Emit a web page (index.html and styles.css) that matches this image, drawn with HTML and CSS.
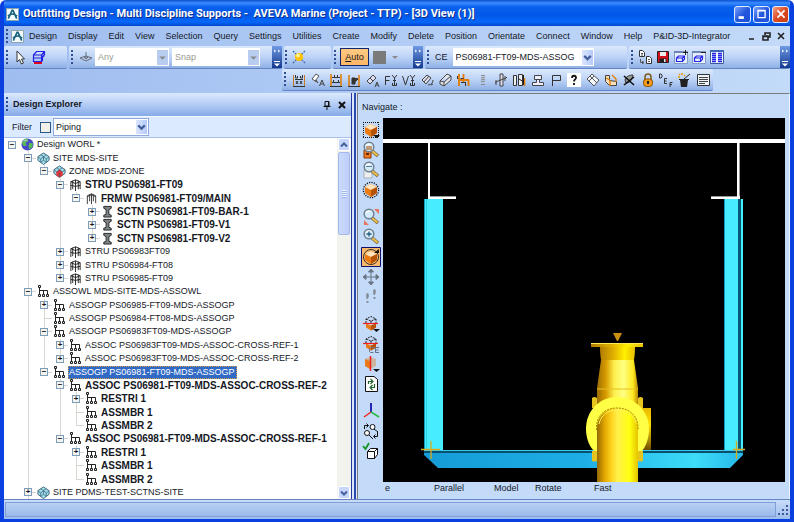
FILE: index.html
```html
<!DOCTYPE html>
<html lang="en">
<head>
<meta charset="utf-8">
<title>Outfitting Design</title>
<link rel="stylesheet" href="styles.css">
</head>
<body>
<svg class="defs" aria-hidden="true">
  <defs>
    <linearGradient id="steel" x1="0" x2="1"><stop offset="0" stop-color="#159cd6"/><stop offset=".5" stop-color="#1eaee6"/><stop offset=".85" stop-color="#3edcf8"/><stop offset="1" stop-color="#26b8ea"/></linearGradient>
    <linearGradient id="neck" x1="0" x2="1"><stop offset="0" stop-color="#9a6c00"/><stop offset=".22" stop-color="#d99c00"/><stop offset=".42" stop-color="#fdf04e"/><stop offset=".65" stop-color="#ffff82"/><stop offset=".88" stop-color="#ffe820"/><stop offset="1" stop-color="#b98700"/></linearGradient>
    <linearGradient id="collar" x1="0" x2="1"><stop offset="0" stop-color="#b07c00"/><stop offset=".4" stop-color="#e2b200"/><stop offset=".7" stop-color="#fff000"/><stop offset="1" stop-color="#e8bd00"/></linearGradient>
    <linearGradient id="pipe" x1="0" x2="1"><stop offset="0" stop-color="#946800"/><stop offset=".18" stop-color="#e0a600"/><stop offset=".35" stop-color="#ffd21e"/><stop offset=".5" stop-color="#fff04a"/><stop offset=".8" stop-color="#ffff10"/><stop offset="1" stop-color="#e6c400"/></linearGradient>
    <linearGradient id="side" x1="0" y1="0" x2="0" y2="1"><stop offset="0" stop-color="#e8b800"/><stop offset=".4" stop-color="#ffe000"/><stop offset="1" stop-color="#6e4c00"/></linearGradient>
  </defs>
  <symbol id="logo" viewBox="0 0 14 14"><rect width="14" height="14" rx="1" fill="#f4fbfd"/><path d="M.5.5h13v13H.5z" fill="none" stroke="#8099a8"/><path d="M2.500 11.500 6.500 2.500h1l4 9M2 8.500c4-3 7-3 10 .5" fill="none" stroke="#17627f" stroke-width="1.700"/></symbol>
  <symbol id="chev" viewBox="0 0 10 10"><path d="m2 3.500 3 3 3-3" fill="none" stroke="#435f9c" stroke-width="2"/></symbol>
  <symbol id="tri" viewBox="0 0 10 10"><path d="M2 4h6L5 7z" fill="#8a8a8a"/></symbol>
  <symbol id="more" viewBox="0 0 10 22"><path d="M2 4l1.500 1L2 6M6 4l1.500 1L6 6" fill="none" stroke="#fff"/><path d="M2 15h6v1H2zM2 17.500h6l-3 3z" fill="#fff"/></symbol>
  <symbol id="arrow" viewBox="0 0 16 16"><path d="M5 2v11l2.500-2.500L9.500 15l2-1-2-4h3z" fill="#fff" stroke="#333"/></symbol>
  <symbol id="bluebox" viewBox="0 0 16 16"><path d="M2.500 6 5.500 2.500h8v3l-2 2v4l-1 1h-8zM2.500 6h8v6.500M10.500 6l3-3.500M2.500 9h8l3-2.500" fill="none" stroke="#2424e8" stroke-width="1.200"/><path d="M3 14h8" stroke="#e00020" stroke-width="2"/></symbol>
  <symbol id="plane" viewBox="0 0 16 16"><path d="m2 9 6-2 6 2-6 3zM8 3v7M6 8l2 2 2-2" fill="#b7cbe8" stroke="#666e7a"/></symbol>
  <symbol id="sun" viewBox="0 0 16 16"><path d="m2 2 4 4m8-4-4 4M2 14l4-4m8 4-4-4" stroke="#3568b0" stroke-width="1.300" stroke-dasharray="2 1"/><circle cx="8" cy="8" r="4" fill="#ffc100"/><circle cx="7" cy="6.500" r="2" fill="#fff08a"/></symbol>
  <symbol id="copy" viewBox="0 0 16 16"><path d="M2.500 1.500h3l2 2v4h-5zM9.500 7.500h3l2 2v5h-5z" fill="#fff" stroke="#333"/><path d="M4 4.500h2M4 6h2M11 10.500h2M11 12.500h2M3.500 10v3.500h3M5 12l2 1.500L5 15" fill="none" stroke="#555"/></symbol>
  <symbol id="disk" viewBox="0 0 16 16"><path d="M2.500 2.500h11v11h-11z" fill="#d4101c" stroke="#222"/><path d="M5 3h6v4H5z" fill="#eee"/><path d="M4.500 9.500h7V13h-7z" fill="#222"/><path d="M9 10h1.500v3H9z" fill="#eee"/></symbol>
  <symbol id="winbox" viewBox="0 0 16 16"><path d="M1.500 2.500h13v12h-13z" fill="#e6effd" stroke="#8399c2"/><path d="M1 2h9v2H1z" fill="#6f86b4"/><path d="m3.500 9 2-2h6v3l-2 2.500h-6zm0 0h6v3.500m0-3.500 2-2" fill="none" stroke="#2424e8" stroke-width="1.200"/></symbol>
  <symbol id="plus" viewBox="0 0 16 16"><path d="M10 3.500h5M12.500 1v5" stroke="#222"/></symbol>
  <symbol id="minus" viewBox="0 0 16 16"><path d="M10 3.500h5" stroke="#222"/></symbol>
  <symbol id="cols" viewBox="0 0 16 16"><path d="M1.500 1.500h13v13h-13z" fill="#f2f6ff" stroke="#3b5a9c"/><path d="M1 1h14v2H1z" fill="#3f67b8"/><path d="M3 4.500h4M3 6.500h4M3 8.500h4M3 10.500h4M3 12.500h4M9 4.500h4M9 6.500h4M9 8.500h4M9 10.500h4M9 12.500h4" stroke="#2424e8" stroke-width="1.400"/></symbol>
  <symbol id="frame1" viewBox="0 0 16 16"><path d="M2.500 3v11M13.500 3v11" stroke="#c87a20"/><path d="M2 14.500h12M4.500 3v3h2V4m3 0v2h2V3M4 7.500h8M5 9l2 3m0-3-2 3M9 9l2 3m0-3-2 3" fill="none" stroke="#333"/></symbol>
  <symbol id="frame2" viewBox="0 0 16 16"><path d="M3 2v12M13 2v12" stroke="#e07a00" stroke-width="1.500"/><path d="M4 5.500h8M6.500 3v3m3-3v3M4 10.500h8M5.500 8v3m5-3v3M2 14.500h12" fill="none" stroke="#333"/></symbol>
  <symbol id="frame3" viewBox="0 0 16 16"><path d="M3 14V3M13 3v11" fill="none" stroke="#e07a00" stroke-width="1.500"/><path d="M6.500 12V6.500H12M6 6h3v6H6z" fill="#333" stroke="#333"/><path d="m9 10 3-3M2 14.500h12" stroke="#333"/></symbol>
  <symbol id="pipeA" viewBox="0 0 16 16"><path d="M2 7 6 2l3 2-4 5zM5 9l2 1" fill="#fff" stroke="#555"/><path d="m9.500 14 2.500-6 2.500 6m-4-2h3M6 8l2 3" fill="none" stroke="#444"/></symbol>
  <symbol id="clampA" viewBox="0 0 16 16"><path d="m2 9 6-6 3 3-6 6zM5 6l3 3" fill="#dde" stroke="#444"/><path d="m10 15 2-5 2 5m-3-2h2" fill="none" stroke="#444"/></symbol>
  <symbol id="ftool" viewBox="0 0 16 16"><path d="M2.500 13V4.500H7M2.500 8.500h4M9 3l2.500 3L14 3M11.500 6v7M10 8.500h3M9.500 11v2.500h4V11" fill="none" stroke="#333"/></symbol>
  <symbol id="vtool" viewBox="0 0 16 16"><path d="m1.500 4 3 9 3-9M9 3l2.500 3L14 3M11.500 6v7M10 8.500h3M9.500 11v2.500h4V11" fill="none" stroke="#333"/></symbol>
  <symbol id="clamp" viewBox="0 0 16 16"><path d="m2 8 5-5 4 3-5 6zM4 10l5-6" fill="#dde" stroke="#444"/><path d="M8 13c3 0 5-2 5-5M11 13l2-1" fill="none" stroke="#444"/></symbol>
  <symbol id="pipe2" viewBox="0 0 16 16"><path d="m2 9 7-7 4 2v4l-7 6-4-2zM2 9l4 1 7-6M6 10v4" fill="#e4e8ef" stroke="#444"/></symbol>
  <symbol id="trest" viewBox="0 0 16 16"><path d="M3 2v12M7.500 2v8M3 8h10M12.500 8v6" fill="none" stroke="#e07a00" stroke-width="1.800"/><path d="M4.500 6.500h3M9.500 10v4M1.500 4v3M5 10.500h4" stroke="#333"/></symbol>
  <symbol id="spring" viewBox="0 0 16 16"><path d="M6 3.500h4M6 6l4-1M6 8l4-1M6 10l4-1M6 12.500h4" stroke="#8a8a8a" stroke-width="1.200"/></symbol>
  <symbol id="valve" viewBox="0 0 16 16"><path d="M7 2h3v12H7zM2 11l3-2 8-3 1-1" fill="#dde" stroke="#444"/><path d="M3 8v5m9-9v5" stroke="#444"/></symbol>
  <symbol id="tubes" viewBox="0 0 16 16"><path d="M2.500 3.500h3v10h-3zM7.500 2.500h4v11h-4z" fill="#eee" stroke="#333"/><path d="M13.500 6v8" stroke="#e07a00" stroke-width="1.500"/><path d="m8 7 5 3M12.500 3v10" stroke="#222"/></symbol>
  <symbol id="shoe" viewBox="0 0 16 16"><path d="M4.500 3.500h7v4h-7zM6.500 7.500v3h-4v3h11v-3h-4v-3" fill="#eef" stroke="#444"/></symbol>
  <symbol id="flag" viewBox="0 0 16 16"><path d="M4.500 14V3.500h8v5h-8" fill="none" stroke="#333"/></symbol>
  <symbol id="help" viewBox="0 0 16 16"><path d="M1 1h14v14H1z" fill="#fff"/><path d="M6 6c0-3 4.500-3 4 0-.2 1.500-2 1.500-2 3.500M8 11v2" fill="none" stroke="#111" stroke-width="1.800"/></symbol>
  <symbol id="roll" viewBox="0 0 16 16"><path d="m2 7 5-5 7 6-5 6zM5 4l7 7M4 9l5-5" fill="#f4f7fb" stroke="#555"/></symbol>
  <symbol id="elbow" viewBox="0 0 16 16"><path d="M2.500 3.500h4v5l7 1v4h-7l-4-4z" fill="#f7dfb8" stroke="#444"/><path d="M7 8v6M3 6l4 2M9 3l4 4v3" fill="none" stroke="#e07a00" stroke-width="1.300"/></symbol>
  <symbol id="cross" viewBox="0 0 16 16"><path d="M4 8c1-4 5-5 8-5-1 5-3 8-7 8z" fill="#999" stroke="#333"/><path d="m3 4 10 9M13 5l-10 8" stroke="#111" stroke-width="1.600"/></symbol>
  <symbol id="lock" viewBox="0 0 16 16"><path d="M5 8V5c0-4 6-4 6 0v3" fill="none" stroke="#7d5b20" stroke-width="1.500"/><rect x="3.500" y="7" width="9" height="7.500" rx="3" fill="#f39a1b" stroke="#8b5200"/><path d="M8 9v3" stroke="#222" stroke-width="2"/></symbol>
  <symbol id="def" viewBox="0 0 16 16"><path d="M1.500 2v4h1.500l1-1V3L3 2zM9 6.500H6.500v5H9M6.500 9h2M14.500 10.500H12V15M12 12.500h2" fill="none" stroke="#333"/></symbol>
  <symbol id="magic" viewBox="0 0 16 16"><path d="M4 8h8l-1 7H5z" fill="#222"/><path d="M3 7.500h10" stroke="#222"/><path d="m8 7 6-5" stroke="#222"/><path d="m3 2 1 1m2-2v2M2 5h2m4-1 1-1" stroke="#e69b00" stroke-width="1.600"/></symbol>
  <symbol id="list" viewBox="0 0 16 16"><path d="M2.500 2.500h12v11h-12z" fill="#edf3fb" stroke="#333"/><path d="M4 5.500h9M4 7.500h9M4 9.500h9M4 11.500h6" stroke="#444"/></symbol>

  <symbol id="globe" viewBox="0 0 14 14"><circle cx="7" cy="7" r="6.500" fill="#4747c8"/><path d="M3 2c2-2 4-1 5 0L7 4 5 5l1 3-3 1-2-3zM9 5l4 1-1 4-3 2-1-3z" fill="#58b957"/><path d="M3 4c1-2 3-2 4-1" fill="none" stroke="#c4d2ff"/></symbol>
  <symbol id="site" viewBox="0 0 14 14"><path d="m7 1 6 4v4l-6 4.500L1 9V5z" fill="#9fdeec" stroke="#3d6376"/><path d="m1 5 3 2.500L7 5l3 2.500L13 5M4 3l3 2 3-2M4 7.500V11m6-3.500V11M7 5v4l-3 2m3-2 3 2" fill="none" stroke="#3d6376" stroke-width=".8"/></symbol>
  <symbol id="zone" viewBox="0 0 14 14"><path d="m7 1 6 4v4l-6 4.500L1 9V5z" fill="#9fdeec" stroke="#3d6376"/><path d="m7 5 3.500 2.500v3.500L7 13.500 3.500 11V7.500z" fill="#e0373d"/><path d="m1 5 3 2.500L7 5l3 2.500L13 5M4 3l3 2 3-2M7 9v4" fill="none" stroke="#4d4f60" stroke-width=".8"/></symbol>
  <symbol id="stru" viewBox="0 0 14 14"><path d="M2 13V4l5-2 5 2v8M7 2v12M10 3v9M4 3v9M2 4l5 2 5-2M2 8l5 1 5-1" fill="none" stroke="#222"/></symbol>
  <symbol id="frmw" viewBox="0 0 14 14"><path d="M2.500 13V4L7 2l4.500 2v8M5 3v7m4-7v7M2.500 5 7 3l4.500 2M7 2v11" fill="none" stroke="#333"/></symbol>
  <symbol id="beam" viewBox="0 0 14 14"><path d="M3 1.500h8v2L8.500 5v5l2.500 1v2H3v-2l2.500-1V5L3 3.500z" fill="#7d8588" stroke="#222"/></symbol>
  <symbol id="asso" viewBox="0 0 13 13"><path d="M2.500 3v7M2.500 5.500h8V10M6.500 5.500V10" fill="none" stroke="#222"/><path d="M1.500.5h2v2h-2zM1.500 9.500h2v2h-2zM5.500 9.500h2v2h-2zM9.500 9.500h2v2h-2z" fill="#d4e9e9" stroke="#222"/></symbol>

  <symbol id="cube" viewBox="0 0 20 20"><path d="m10 4 6 3v6l-6 4-6-4V7z" fill="#ea7c12"/><path d="m4 7 6-3 6 3-6 3z" fill="#ffe4be"/><path d="m10 10 6-3v6l-6 4z" fill="#b65307"/></symbol>
  <symbol id="cubesel" viewBox="0 0 20 20"><path d="M2 2.500h16M2 17.500h16M2.500 2v16M17.500 2v16" fill="none" stroke="#111" stroke-dasharray="1 1"/><use href="#cube"/><path d="M12 15h7l-3.500 3z" fill="#111"/></symbol>
  <symbol id="lens" viewBox="0 0 20 20"><path d="m11 11 6 5" stroke="#7b663b" stroke-width="3.500"/><path d="m11 11 5.500 4.500" stroke="#efc34c" stroke-width="2"/><circle cx="8" cy="7" r="4.800" fill="#d3ebf9" stroke="#71808e" stroke-width="1.500"/><path d="M5 6c1-2 3-2 4-1" stroke="#fff" fill="none" stroke-width="1.500"/></symbol>
  <symbol id="zoomo" viewBox="0 0 20 20"><path d="M3 10h7v8H3z" fill="#ef7a20" stroke="#873900"/><use href="#lens"/><path d="M5 6h6v4H5z" fill="#bd997a"/><path d="M5 14h3" stroke="#632600" stroke-width="2"/></symbol>
  <symbol id="zoomg" viewBox="0 0 20 20"><path d="M3 10h8v8H3z" fill="#eee" stroke="#aab2bb"/><use href="#lens"/><path d="M5 6.500h6" stroke="#5b7c98"/></symbol>
  <symbol id="cubecirc" viewBox="0 0 20 20"><circle cx="10" cy="10" r="7.600" fill="none" stroke="#111" stroke-width="1.300" stroke-dasharray="1.200 1.200"/><use href="#cube"/></symbol>
  <symbol id="zoomfit" viewBox="0 0 20 20"><use href="#lens"/><path d="M13 2h5v5zM3 13v5h5z" fill="#e8755c"/></symbol>
  <symbol id="zoomin" viewBox="0 0 20 20"><use href="#lens"/><path d="M5.500 7h5M8 4.500v5" stroke="#245a82" stroke-width="1.300"/></symbol>
  <symbol id="rotate" viewBox="0 0 20 20"><path d="M.5.500h19v19H.5z" fill="#fdb96a" stroke="#101070"/><circle cx="10" cy="10" r="7.500" fill="none" stroke="#333"/><use href="#cube"/><path d="M13 6h5V2z" fill="#111"/></symbol>
  <symbol id="pan" viewBox="0 0 20 20"><path d="M10 3v14M3 10h14M7.500 5 10 2l2.500 3zM7.500 15l2.500 3 2.500-3zM5 7.500 2 10l3 2.500zM15 7.500l3 2.500-3 2.500z" fill="#6a7683" stroke="#6a7683"/></symbol>
  <symbol id="walk" viewBox="0 0 20 20"><path d="M5 9c0-4 3-4 3 0l-1 3H5.500zM12 5c0-4 3-4 3 0l-1 3h-1.500zM5.500 14h2v2h-2zM12.500 10h2v2h-2z" fill="#88919c"/></symbol>
  <symbol id="clip" viewBox="0 0 20 20"><path d="m5 9.500 5 2 5-2v4l-5 3-5-3z" fill="#e97a17"/><path d="m10 11.500 5-2v4l-5 3z" fill="#b65307"/><path d="M5 9V5l5-2.500L15 5v4M5 5l5 2 5-2M10 7v3" fill="none" stroke="#222" stroke-dasharray="2 1"/><path d="M2 9.500h15" stroke="#f02020" stroke-width="1.200"/></symbol>
  <symbol id="clipd" viewBox="0 0 20 20"><use href="#clip"/><path d="M12 15h7l-3.500 3z" fill="#111"/></symbol>
  <symbol id="clipce" viewBox="0 0 20 20"><use href="#clip"/><path d="M12.500 13.500H9.500l-1 1v3l1 1h3M18 13.500h-3.500v5H18M14.500 16h3" fill="none" stroke="#64738a"/></symbol>
  <symbol id="clipv" viewBox="0 0 20 20"><path d="m4 5 5-2 6 2v7l-6 3-5-3z" fill="#cbb5a0"/><path d="M4 5l5 2v8l-5-3z" fill="#e97a17"/><path d="M9.500 2v15" stroke="#f02020" stroke-width="1.500"/><path d="M12 15h7l-3.500 3z" fill="#111"/></symbol>
  <symbol id="refresh" viewBox="0 0 20 20"><path d="M4.500 2.500H13l3.500 3v12h-12z" fill="#fff" stroke="#111"/><path d="M7.500 10V7.500H11M9.500 5l2.500 2.500L9.500 10M13.500 10v3.500H10m1.500-2.500L9 13.500l2.500 2.500" fill="none" stroke="#23652e" stroke-width="1.200"/></symbol>
  <symbol id="axes" viewBox="0 0 20 20"><path d="M10 11V2" stroke="#2525b8" stroke-width="2"/><path d="m10 11-7 5" stroke="#f02525" stroke-width="1.500"/><path d="m10 11 8 5" stroke="#2bb944" stroke-width="1.500"/></symbol>
  <symbol id="swap" viewBox="0 0 20 20"><path d="M3.500 8V4.500H7M5.500 2.500l2 2-2 2M16.500 11v4.500H13m1.500-2-2 2 2 2M13 8l4 3M8 14l4 4" fill="none" stroke="#111"/><circle cx="11.500" cy="6" r="2.500" fill="#fff" stroke="#111"/><circle cx="6" cy="12" r="2.500" fill="#fff" stroke="#111"/></symbol>
  <symbol id="check" viewBox="0 0 20 20"><path d="M6.500 10.500l3-3h7v6l-3 4h-7zm0 0h7v7m0-7 3-3" fill="#fff" stroke="#111"/><path d="m2 5 2.500 3L8 2" fill="none" stroke="#169322" stroke-width="1.800"/></symbol>
</svg>

<div class="window">
  <header class="titlebar">
    <svg class="logo"><use href="#logo"/></svg>
    <h1>Outfitting Design - Multi Discipline Supports -&nbsp; AVEVA Marine (Project - TTP) - [3D View (1)]</h1>
    <button class="wb" aria-label="Minimize"><svg viewBox="0 0 18 18"><path d="M4 13h6" stroke="#fff" stroke-width="3"/></svg></button>
    <button class="wb" aria-label="Maximize"><svg viewBox="0 0 18 18"><path d="M4.500 5h8v8h-8zM4 5.500h9" fill="none" stroke="#fff" stroke-width="1.500"/></svg></button>
    <button class="wb close" aria-label="Close"><svg viewBox="0 0 18 18"><path d="m5 5 8 8m0-8-8 8" stroke="#fff" stroke-width="2"/></svg></button>
  </header>

  <nav class="menubar">
    <span class="grip"></span><svg class="logo"><use href="#logo"/></svg>
    <button>Design</button><button>Display</button><button>Edit</button><button>View</button><button>Selection</button><button>Query</button><button>Settings</button><button>Utilities</button><button>Create</button><button>Modify</button><button>Delete</button><button>Position</button><button>Orientate</button><button>Connect</button><button>Window</button><button>Help</button><button>P&amp;ID-3D-Integrator</button>
    <svg class="mdi" viewBox="0 0 38 12"><path d="M2 9h5M16 6h5v4h-5zM16 6.500h5M18 5V3h5v4h-2M31 3l6 6m0-6-6 6" fill="none" stroke="#222" stroke-width="1.600"/></svg>
  </nav>

  <div class="toolrow">
    <div class="bar b1"><span class="grip"></span><button aria-label="Select"><svg><use href="#arrow"/></svg></button><button aria-label="Volume"><svg><use href="#bluebox"/></svg></button></div>
    <div class="bar b2"><span class="grip"></span><button aria-label="Plane"><svg><use href="#plane"/></svg></button>
      <span class="combo off any"><select aria-label="Pick filter" disabled><option>Any</option></select><svg><use href="#tri"/></svg></span>
      <span class="combo off snap"><select aria-label="Snap" disabled><option>Snap</option></select><svg><use href="#tri"/></svg></span>
      <button class="more" aria-label="More"><svg><use href="#more"/></svg></button></div>
    <div class="bar b3"><span class="grip"></span><button class="sun" aria-label="Light"><svg><use href="#sun"/></svg></button></div>
    <div class="bar b4"><span class="grip"></span><button class="auto"><u>A</u>uto</button><button class="swatch" aria-label="Colour"></button><svg class="drop"><use href="#tri"/></svg><button class="more" aria-label="More"><svg><use href="#more"/></svg></button></div>
    <div class="bar b5"><span class="grip"></span><label for="ce">CE</label><span class="combo ce"><select id="ce"><option>PS06981-FT09-MDS-ASSOG</option></select><svg><use href="#chev"/></svg></span></div>
    <div class="bar b6"><span class="grip"></span><button aria-label="Copy"><svg><use href="#copy"/></svg></button><button aria-label="Save"><svg><use href="#disk"/></svg></button><button aria-label="Add view"><svg><use href="#winbox"/><use href="#plus"/></svg></button><button aria-label="Remove view"><svg><use href="#winbox"/><use href="#minus"/></svg></button><button aria-label="Columns"><svg><use href="#cols"/></svg></button><button class="more" aria-label="More"><svg><use href="#more"/></svg></button></div>
  </div>

  <div class="supportrow">
    <div class="bar support"><span class="grip"></span>
      <button aria-label="Frame"><svg><use href="#frame1"/></svg></button><button aria-label="Pipe attach"><svg><use href="#pipeA"/></svg></button><button aria-label="Frame span"><svg><use href="#frame2"/></svg></button><button aria-label="Frame corner"><svg><use href="#frame3"/></svg></button><button aria-label="Clamp attach"><svg><use href="#clampA"/></svg></button><button aria-label="Fixed tool"><svg><use href="#ftool"/></svg></button><button aria-label="Variable tool"><svg><use href="#vtool"/></svg></button><button aria-label="Clamp"><svg><use href="#clamp"/></svg></button><button aria-label="Pipe"><svg><use href="#pipe2"/></svg></button><button aria-label="Trestle"><svg><use href="#trest"/></svg></button><button aria-label="Spring"><svg><use href="#spring"/></svg></button><button aria-label="Valve"><svg><use href="#valve"/></svg></button><button aria-label="Tubes"><svg><use href="#tubes"/></svg></button><button aria-label="Shoe"><svg><use href="#shoe"/></svg></button><button aria-label="Flag"><svg><use href="#flag"/></svg></button><button aria-label="Help"><svg><use href="#help"/></svg></button><button aria-label="Roll"><svg><use href="#roll"/></svg></button><button aria-label="Elbow"><svg><use href="#elbow"/></svg></button><button aria-label="Delete"><svg><use href="#cross"/></svg></button><button aria-label="Lock"><svg><use href="#lock"/></svg></button><button aria-label="Defaults"><svg><use href="#def"/></svg></button><button aria-label="Wizard"><svg><use href="#magic"/></svg></button><button aria-label="List"><svg><use href="#list"/></svg></button>
    </div>
  </div>

  <main class="work">
    <section class="explorer">
      <div class="phead"><span class="grip"></span><h2>Design Explorer</h2>
        <button aria-label="Pin"><svg viewBox="0 0 10 10"><path d="M3 1.500h4V6H3zM1.500 6.500h7M5 6v4M6.500 2v4" fill="none" stroke="#111"/></svg></button>
        <button aria-label="Close"><svg viewBox="0 0 10 10"><path d="m2 2 6 6m0-6L2 8" stroke="#111" stroke-width="2"/></svg></button></div>
      <div class="filter"><label for="fon">Filter</label><input type="checkbox" id="fon"><span class="combo pip"><select aria-label="Filter type"><option>Piping</option></select><svg><use href="#chev"/></svg></span></div>
      <div class="treebox">
        <ul class="tree">
          <li><b class="n root"><button class="ex">−</button></b><svg><use href="#globe"/></svg><span>Design WORL *</span></li>
          <li><i></i><b class="n"><button class="ex">−</button></b><svg><use href="#site"/></svg><span>SITE MDS-SITE</span></li>
          <li><i></i><i class="l"></i><b class="n end"><button class="ex">−</button></b><svg><use href="#zone"/></svg><span>ZONE MDS-ZONE</span></li>
          <li class="bold"><i></i><i class="l"></i><i></i><b class="n"><button class="ex">−</button></b><svg><use href="#stru"/></svg><span>STRU PS06981-FT09</span></li>
          <li class="bold"><i></i><i class="l"></i><i></i><i class="l"></i><b class="n end"><button class="ex">−</button></b><svg><use href="#frmw"/></svg><span>FRMW PS06981-FT09/MAIN</span></li>
          <li class="bold"><i></i><i class="l"></i><i></i><i class="l"></i><i></i><b class="n"><button class="ex">+</button></b><svg><use href="#beam"/></svg><span>SCTN PS06981-FT09-BAR-1</span></li>
          <li class="bold"><i></i><i class="l"></i><i></i><i class="l"></i><i></i><b class="n"><button class="ex">+</button></b><svg><use href="#beam"/></svg><span>SCTN PS06981-FT09-V1</span></li>
          <li class="bold"><i></i><i class="l"></i><i></i><i class="l"></i><i></i><b class="n end"><button class="ex">+</button></b><svg><use href="#beam"/></svg><span>SCTN PS06981-FT09-V2</span></li>
          <li><i></i><i class="l"></i><i></i><b class="n"><button class="ex">+</button></b><svg><use href="#stru"/></svg><span>STRU PS06983FT09</span></li>
          <li><i></i><i class="l"></i><i></i><b class="n"><button class="ex">+</button></b><svg><use href="#stru"/></svg><span>STRU PS06984-FT08</span></li>
          <li><i></i><i class="l"></i><i></i><b class="n end"><button class="ex">+</button></b><svg><use href="#stru"/></svg><span>STRU PS06985-FT09</span></li>
          <li><i></i><b class="n"><button class="ex">−</button></b><svg><use href="#asso"/></svg><span>ASSOWL MDS-SITE-MDS-ASSOWL</span></li>
          <li><i></i><i class="l"></i><b class="n"><button class="ex">+</button></b><svg><use href="#asso"/></svg><span>ASSOGP PS06985-FT09-MDS-ASSOGP</span></li>
          <li><i></i><i class="l"></i><b class="n"></b><svg><use href="#asso"/></svg><span>ASSOGP PS06984-FT08-MDS-ASSOGP</span></li>
          <li><i></i><i class="l"></i><b class="n"><button class="ex">−</button></b><svg><use href="#asso"/></svg><span>ASSOGP PS06983FT09-MDS-ASSOGP</span></li>
          <li><i></i><i class="l"></i><i class="l"></i><b class="n"><button class="ex">+</button></b><svg><use href="#asso"/></svg><span>ASSOC PS06983FT09-MDS-ASSOC-CROSS-REF-1</span></li>
          <li><i></i><i class="l"></i><i class="l"></i><b class="n end"><button class="ex">+</button></b><svg><use href="#asso"/></svg><span>ASSOC PS06983FT09-MDS-ASSOC-CROSS-REF-2</span></li>
          <li class="sel"><i></i><i class="l"></i><b class="n end"><button class="ex">−</button></b><svg><use href="#asso"/></svg><span>ASSOGP PS06981-FT09-MDS-ASSOGP</span></li>
          <li class="bold"><i></i><i class="l"></i><i></i><b class="n"><button class="ex">−</button></b><svg><use href="#asso"/></svg><span>ASSOC PS06981-FT09-MDS-ASSOC-CROSS-REF-2</span></li>
          <li class="bold"><i></i><i class="l"></i><i></i><i class="l"></i><b class="n"><button class="ex">+</button></b><svg><use href="#asso"/></svg><span>RESTRI 1</span></li>
          <li class="bold"><i></i><i class="l"></i><i></i><i class="l"></i><b class="n"></b><svg><use href="#asso"/></svg><span>ASSMBR 1</span></li>
          <li class="bold"><i></i><i class="l"></i><i></i><i class="l"></i><b class="n end"></b><svg><use href="#asso"/></svg><span>ASSMBR 2</span></li>
          <li class="bold"><i></i><i class="l"></i><i></i><b class="n end"><button class="ex">−</button></b><svg><use href="#asso"/></svg><span>ASSOC PS06981-FT09-MDS-ASSOC-CROSS-REF-1</span></li>
          <li class="bold"><i></i><i class="l"></i><i></i><i></i><b class="n"><button class="ex">+</button></b><svg><use href="#asso"/></svg><span>RESTRI 1</span></li>
          <li class="bold"><i></i><i class="l"></i><i></i><i></i><b class="n"></b><svg><use href="#asso"/></svg><span>ASSMBR 1</span></li>
          <li class="bold"><i></i><i class="l"></i><i></i><i></i><b class="n end"></b><svg><use href="#asso"/></svg><span>ASSMBR 2</span></li>
          <li><i></i><b class="n"><button class="ex">+</button></b><svg><use href="#site"/></svg><span>SITE PDMS-TEST-SCTNS-SITE</span></li>
        </ul>
        <div class="scroll"><button aria-label="Scroll up"><svg class="flip"><use href="#chev"/></svg></button><span class="thumb"></span><span class="track"></span><button aria-label="Scroll down"><svg><use href="#chev"/></svg></button></div>
      </div>
    </section>
    <div class="splitter"></div>
    <section class="view">
      <div class="prompt">Navigate :</div>
      <div class="stage">
        <div class="navtools">
          <button aria-label="Select view"><svg><use href="#cubesel"/></svg></button><button aria-label="Zoom element"><svg><use href="#zoomo"/></svg></button><button aria-label="Zoom selection"><svg><use href="#zoomg"/></svg></button><button aria-label="Limits"><svg><use href="#cubecirc"/></svg></button>
          <button class="gap" aria-label="Zoom window"><svg><use href="#zoomfit"/></svg></button><button aria-label="Zoom in"><svg><use href="#zoomin"/></svg></button><button aria-label="Rotate"><svg><use href="#rotate"/></svg></button><button aria-label="Pan"><svg><use href="#pan"/></svg></button><button aria-label="Walk"><svg><use href="#walk"/></svg></button>
          <button class="gap" aria-label="Clip"><svg><use href="#clipd"/></svg></button><button aria-label="Clip CE"><svg><use href="#clipce"/></svg></button><button aria-label="Clip plane"><svg><use href="#clipv"/></svg></button><button aria-label="Refresh"><svg><use href="#refresh"/></svg></button>
          <button class="gap" aria-label="Axes"><svg><use href="#axes"/></svg></button><button aria-label="Swap"><svg><use href="#swap"/></svg></button><button aria-label="Check"><svg><use href="#check"/></svg></button>
        </div>
        <svg class="scene" viewBox="383 118 402 364" preserveAspectRatio="none" role="img" aria-label="3D view of pipe support">
          <path d="M383 139h402v4H383z" fill="#fff"/>
          <path d="M428 143h2v53h26v3h-28zM737 143h3v56h-29v-3h26z" fill="#fff"/>
          <path d="M456 196h-26v1h26zM711 196h26v1h-26zM739 143h1v53h-1z" fill="#999"/>
          <path d="M424 199h19v251h-19z" fill="#48ecff"/><path d="M424 199h1v251h-1z" fill="#119abb"/><path d="M426 199h1v251h-1z" fill="#32d2ea"/>
          <path d="M724 199h14v251h-14zM741 199h2v251h-2z" fill="#48ecff"/><path d="M724 199h1v251h-1z" fill="#119abb"/><path d="M738 199h3v251h-3z" fill="#075875"/>
          <path d="M424 450h319v5l-13 13H438l-14-13z" fill="url(#steel)"/>
          <path d="M424 450h319v1H424z" fill="#36c9ef"/><path d="M424 451h319v2H424z" fill="#07506f"/>
          <path d="M421 449.500h19M431 441v18M733 449.500h12M736.500 441v18" stroke="#d9ac1c" stroke-width="1.300"/>
          <path d="M613 333h9l-4 8h-1z" fill="#c98f10"/>
          <path d="M640 408h11v42h-11z" fill="url(#side)"/>
          <path d="M600 347h35l-1 13 4 28v20h-41v-20l4-28z" fill="url(#neck)"/>
          <path d="M600 347h35l-1 13h-33z" fill="url(#collar)"/>
          <path d="M591 343h52v4h-52z" fill="url(#collar)"/><path d="M591 343h52v1h-52z" fill="#ffe95a"/>
          <path d="M597 389h41" stroke="#e8c020"/>
          <path d="M592 398q2.500-2 5 0v10h-5zM638 398q2.500-2 5 0v10h-5zM592 451h5v10q-2.500 1-5 0zM638 451h5v10q-2.500 1-5 0z" fill="#e6c420"/>
          <path d="M617 397c18 0 32 14 32 32 0 9-3 17-7 22h-48c-5-5-8-13-8-22 0-18 13-32 31-32z" fill="#ffff46"/>
          <path d="M597 482v-54c0-12 9-20 20-20s21 8 21 20v54z" fill="url(#pipe)"/>
          <path d="M596.500 430c-1-15 9-22 20.500-22s22 7 21 22" fill="none" stroke="#a98a08" stroke-dasharray="2 1"/>
          <path d="M599 424c2-9 9-14 18-14s17 5 19 13" fill="none" stroke="#fff35a"/>
        </svg>
      </div>
      <div class="modes"><span>e</span><span>Parallel</span><span>Model</span><span>Rotate</span><span>Fast</span></div>
    </section>
  </main>
  <footer class="status"><span class="msg"></span><svg viewBox="0 0 12 12"><path d="M9 1h2v2H9zM5 5h2v2H5zM9 5h2v2H9zM1 9h2v2H1zM5 9h2v2H5zM9 9h2v2H9z" fill="#3e5a9a"/></svg></footer>
</div>
</body>
</html>
```
FILE: styles.css
```css
* { box-sizing: border-box; }
body { margin: 0; font: 9px/13px "Liberation Sans", Arial, sans-serif; color: #15181f; }
button { border: 0; padding: 0; margin: 0; background: none; font: inherit; color: inherit; display: flex; align-items: center; justify-content: center; flex: none; }
svg { display: block; flex: none; width: 16px; height: 16px; }
.defs { position: absolute; width: 0; height: 0; }
h1, h2 { margin: 0; }

.window { height: 100vh; min-height: 500px; display: flex; flex-direction: column; border: solid #0a3fe0; border-width: 0 4px 3px; border-radius: 6px 6px 0 0; background: linear-gradient(90deg, #9fbdf0, #c3daf9); overflow: hidden; }

.titlebar { flex: none; height: 26px; margin: 0 -4px; padding: 2px 5px 0 6px; display: flex; align-items: center; gap: 2px; background: linear-gradient(#0a4fd0, #3b8cff 3px, #0860ec 7px, #0257e8 15px, #0668fa 22px, #0346cc); color: #fff; }
.titlebar h1 { flex: 1; padding-left: 2px; font: bold 11px/16px Roboto, "Liberation Sans", sans-serif; white-space: nowrap; overflow: hidden; text-shadow: 1px 1px #0b2c8c; }
.logo { width: 13px; height: 13px; }
.wb { width: 17px; height: 17px; border: 1px solid #dfe9ff; border-radius: 3px; background: linear-gradient(135deg, #7ba3ff, #2457dd 50%, #1b50d8); }
.wb.close { background: linear-gradient(135deg, #f4a184, #dc4a22 50%, #c93c14); }
.wb svg { width: 16px; height: 16px; }

.menubar { flex: none; height: 20px; padding: 0 10px 0 1px; display: flex; align-items: center; gap: 11px; white-space: nowrap; }
.menubar .logo { margin: 0 -6px 0 -9px; }
.mdi { width: 38px; height: 12px; margin-left: auto; margin-right: -5px; }
.grip { flex: none; width: 2px; height: 15px; margin: 0 1px; background: repeating-linear-gradient(#2f4f94 0 2px, transparent 2px 4px); }

.toolrow { flex: none; height: 23px; display: flex; gap: 2px; }
.bar { display: flex; align-items: center; height: 23px; padding-left: 1px; border-bottom: 1px solid #6485c2; border-radius: 2px; background: linear-gradient(#dce9fd, #bdd3f6 50%, #8fb1e6); }
.b1 { width: 63px; gap: 3px; }
.b1 .grip { margin-right: 1px; }
.b2 { width: 213px; gap: 3px; }
.b2 > button:not(.more) { margin: 0 -2px 0 1px; }
.b3 { width: 47px; }
.b3 .grip { margin-left: 0; }
.sun { margin-left: 3px; }
.b4 { width: 90px; gap: 4px; }
.b4 .grip { margin-left: 0; margin-right: 0; }
.auto { width: 29px; height: 18px; border: 1px solid #14246e; background: linear-gradient(#ffc983, #ffb765); }
.swatch { width: 13px; height: 13px; background: #7a7a7a; }
.drop { width: 10px; height: 10px; }
.b5 { width: 202px; }
.b5 label { margin: 0 5px; }
.b6 { flex: 1; gap: 2px; }
.b6 .grip { margin-right: 2px; }
.more { width: 10px; height: 22px; margin-left: auto; background: linear-gradient(#6f9ae4, #14398f); }
.more svg { width: 10px; height: 22px; }

.combo { display: flex; align-items: center; height: 18px; padding: 1px; background: #fff; }
.combo select { flex: 1; min-width: 0; appearance: none; border: 0; margin: 0; padding: 0 2px; background: none; font: inherit; color: inherit; opacity: 1; }
.combo svg { width: 11px; height: 15px; background: linear-gradient(90deg, #dbe6ff, #b5caf8); }
.off { color: #9b9b91; }
.off svg { background: #b9cdf0; }
.any { width: 74px; }
.snap { width: 88px; }
.ce { width: 141px; }

.supportrow { flex: none; height: 24px; padding-left: 278px; }
.support { width: 431px; height: 22px; padding-right: 1px; }
.support .grip { margin-right: 4px; }
.support button { flex: 1; }

.work { flex: 1; min-height: 0; display: flex; }
.explorer { flex: 0 0 347px; display: flex; flex-direction: column; background: #fff; }
.phead { flex: none; height: 23px; display: flex; align-items: center; gap: 5px; padding: 0 4px 0 1px; background: linear-gradient(#dce9fe, #b3ccf5 50%, #86abe9); }
.phead .grip { margin-right: 0; }
.phead h2 { flex: 1; font: bold 9px/13px "Liberation Sans", Arial, sans-serif; }
.phead svg { width: 10px; height: 10px; }
.filter { flex: none; height: 22px; display: flex; align-items: center; padding-left: 8px; background: #dceaff; border-top: 1px solid #f3f8ff; border-bottom: 1px solid #a7bfe6; }
.filter input { appearance: none; width: 11px; height: 11px; margin: 0 2px 0 8px; border: 1px solid #2c5a86; background: #f1f1ea; }
.pip { width: 96px; height: 18px; border: 1px solid #8faadc; }
.pip select { padding: 0 1px; }
.pip svg { height: 14px; }

.treebox { flex: 1; min-height: 0; display: flex; }
.tree { flex: 1; min-width: 0; margin: 0; padding: 0; list-style: none; display: flex; flex-direction: column; }
.tree li { flex: 1; min-height: 0; display: flex; align-items: center; white-space: nowrap; }
.tree i { flex: none; width: 16px; align-self: stretch; }
.tree .l { background: linear-gradient(#d8d6ce, #d8d6ce) 8px 0 / 1px 100% no-repeat; }
.n { flex: none; width: 16px; align-self: stretch; display: flex; align-items: center; justify-content: center; background: linear-gradient(#d8d6ce, #d8d6ce) 8px 0 / 1px 100% no-repeat, linear-gradient(#d8d6ce, #d8d6ce) 8px 50% / 8px 1px no-repeat; }
.n.end { background-size: 1px 50%, 8px 1px; }
.n.root { background: none; }
.ex { width: 8px; height: 8px; border: 1px solid #7f9db9; background: #f4f4ef; font: bold 8px/6px "Liberation Sans", sans-serif; overflow: hidden; }
.tree svg { width: 13px; height: 13px; margin: 0 2px 0 1px; }
.tree span { padding: 0 1px; line-height: 13px; }
.bold span { font-weight: bold; font-size: 10px; }
.sel span { background: #316ac5; color: #fff; padding-right: 3px; outline: 1px dotted #d59a4c; outline-offset: -1px; }

.scroll { width: 14px; display: flex; flex-direction: column; align-items: center; background: #f3f3ee; }
.scroll button { width: 12px; height: 13px; border: 1px solid #fff; border-radius: 2px; background: #c6d6fc; }
.scroll svg { width: 10px; height: 10px; }
.flip { transform: rotate(180deg); }
.thumb { flex: none; width: 12px; height: 83px; margin-top: 1px; border: 1px solid #a4b9ea; border-radius: 2px; background: repeating-linear-gradient(#eef4ff 0 1px, #9db8ee 1px 2px) center / 5px 8px no-repeat, linear-gradient(90deg, #cbdaff, #bccefa); }
.track { flex: 1; }

.splitter { flex: none; width: 7px; background: linear-gradient(90deg, #2437a0 0 1px, #dce8fb 1px 3px, #2c48b0 3px 5px, #dce8fb 5px 6px, #7b7b78 6px 7px); }
.view { flex: 1; min-width: 0; display: flex; flex-direction: column; background: #c3daf9; border-top: 1px solid #7b7b78; border-right: 1px solid #eef4ff; }
.prompt { flex: none; padding: 7px 4px 4px; }
.stage { flex: 1; min-height: 0; display: flex; }
.navtools { flex: none; width: 25px; padding-top: 2px; display: flex; flex-direction: column; align-items: center; }
.navtools svg { width: 20px; height: 20px; }
.navtools .gap { margin-top: 7px; }
.scene { flex: 1; min-width: 0; width: auto; height: 100%; background: #000; margin-right: 4px; }
.modes { flex: none; height: 17px; display: grid; grid-template-columns: 49px 60px 41px 59px 1fr; padding-left: 27px; }

.status { flex: none; height: 20px; display: flex; align-items: center; padding: 2px 1px; border-top: 1px solid #6485c2; background: linear-gradient(#c9dcf9, #9ebdec); }
.msg { flex: 1; height: 15px; border: 1px solid #7f9fd6; background: linear-gradient(#b9d0f4, #9ab9ea); }
.status svg { width: 12px; height: 12px; margin-left: 1px; }
```
